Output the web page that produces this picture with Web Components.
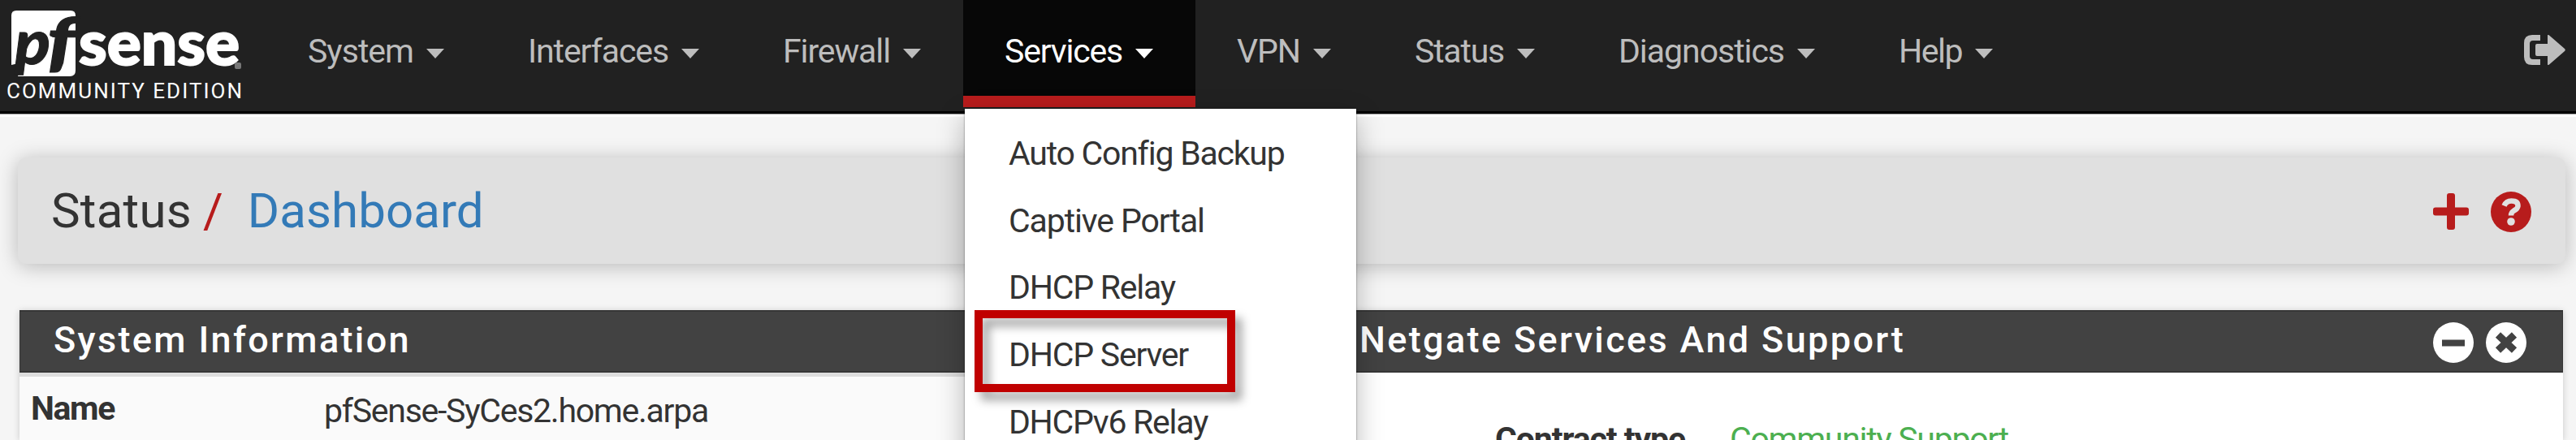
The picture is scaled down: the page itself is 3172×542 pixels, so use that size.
<!DOCTYPE html>
<html lang="en">
<head>
<meta charset="utf-8">
<title>pfSense - Status: Dashboard</title>
<style>
	body {
		margin: 0;
		height: 542px;
		overflow: hidden;
		background: #f5f5f5;
		color: #333;
		font-family: Roboto, "Liberation Sans", sans-serif;
		font-size: 41px;
	}
</style>
</head>
<body>

<template id="pf-logo">
	<style>
		:host { display: block; width: 328px; box-sizing: border-box; padding: 13px 0 0 8px; }
		svg { display: block; overflow: visible; }
		.edition { color: #fff; font-size: 26px; line-height: 30px; margin-top: 3px; }
	</style>
	<svg width="296" height="81" viewBox="8 13 296 81">
		<path fill="#fff" d="M20 13H87Q93 13 93 19V87Q93 94 86 94H22L27 77L14 80V19Q14 13 20 13Z"/>
		<text x="18" y="79" fill="#212121" stroke="#212121" font-family="Lato" font-weight="900" font-style="italic" font-size="76" textLength="44" lengthAdjust="spacingAndGlyphs">p</text>
		<text x="58" y="79" fill="#212121" stroke="#212121" font-family="Lato" font-weight="900" font-style="italic" font-size="80" textLength="35" lengthAdjust="spacingAndGlyphs">f</text>
		<text x="97" y="79.500" fill="#fff" stroke="#fff" stroke-width="2" font-family="Lato" font-weight="900" font-size="76" textLength="198" lengthAdjust="spacingAndGlyphs">sense</text>
		<rect x="289" y="77" width="8" height="8" rx="2" fill="#777"/>
	</svg>
	<div class="edition"><fit-text width="292">COMMUNITY EDITION</fit-text></div>
</template>

<template id="nav-bar">
	<style>
		:host {
			display: flex;
			position: relative;
			z-index: 2;
			height: 137px;
			background: #212121;
			border-bottom: 3px solid #000;
			box-shadow: 0 1px 0 #999, 0 4px 0 #fff;
		}
		nav { display: flex; flex: 1; }
		.logout { margin: 43px 13px 0 0; }
		.logout svg { display: block; }
	</style>
	<pf-logo></pf-logo>
	<nav><slot></slot></nav>
	<div class="logout">
		<svg width="51" height="37" viewBox="0 0 51 37" fill="#bdbdbd">
			<path d="M20 0V7H11Q7 7 7 11V26Q7 30 11 30H20V37H10Q0 37 0 27V10Q0 0 10 0Z"/>
			<path d="M29 1Q29-1 31 .5L50 17Q51.500 18.500 50 20L31 36.500Q29 38 29 36V26H16Q14 26 14 24V13Q14 11 16 11H29Z"/>
		</svg>
	</div>
</template>

<template id="nav-item">
	<style>
		:host { display: block; position: relative; color: #bdbdbd; }
		.link {
			display: flex;
			box-sizing: border-box;
			height: 132px;
			padding: 39px 52px 0 51px;
			gap: 16px;
			line-height: 48px;
			border-bottom: 14px solid transparent;
		}
		:host([active]) { color: #fff; }
		:host([active]) .link { background: #070707; border-color: #b71c1c; }
		.caret {
			width: 0;
			height: 0;
			margin-top: 21px;
			border: 11px solid transparent;
			border-top: 12px solid currentColor;
			border-bottom: 0;
		}
	</style>
	<div class="link"><fit-text></fit-text><span class="caret"></span></div>
	<slot></slot>
</template>

<template id="drop-menu">
	<style>
		:host {
			display: block;
			position: absolute;
			left: 2px;
			top: 134px;
			width: 482px;
			height: 480px;
			box-sizing: border-box;
			padding-top: 12px;
			background: #fff;
			color: #333;
			box-shadow: 0 12px 32px rgba(0, 0, 0, .28), 0 0 2px rgba(0, 0, 0, .5);
		}
	</style>
	<slot></slot>
</template>

<template id="menu-item">
	<style>
		:host { display: block; position: relative; height: 82.7px; line-height: 87px; padding-left: 54px; }
		.mark { display: none; }
		:host([marked]) .mark {
			display: block;
			position: absolute;
			left: 12px;
			top: -12px;
			width: 301px;
			height: 81px;
			border: 10px solid #c00000;
			filter: drop-shadow(8px 10px 6px rgba(0, 0, 0, .36));
		}
	</style>
	<slot></slot><div class="mark"></div>
</template>

<template id="page-header">
	<style>
		:host {
			display: flex;
			justify-content: space-between;
			box-sizing: border-box;
			height: 131px;
			margin: 54px 13px 0 22px;
			padding: 0 42px 0 41px;
			border-radius: 10px;
			background: #e0e0e0;
			box-shadow: 0 3px 26px rgba(0, 0, 0, .25);
			font-size: 60px;
			line-height: 132px;
		}
		.crumbs { display: flex; }
		.slash { color: #b71c1c; margin: 0 30px 0 14px; }
		.page { color: #337ab7; }
		.tools { display: flex; align-items: center; gap: 27px; padding-top: 2px; }
	</style>
	<div class="crumbs">
		<fit-text class="section" width="173">Status</fit-text>
		<span class="slash">/</span>
		<fit-text class="page" width="291">Dashboard</fit-text>
	</div>
	<div class="tools">
		<svg width="44" height="45" viewBox="0 0 44 45" fill="#b71c1c">
			<rect x="17" width="10" height="45" rx="3"/><rect y="17.500" width="44" height="10" rx="3"/>
		</svg>
		<svg width="50" height="50" viewBox="0 0 50 50">
			<circle cx="25" cy="25" r="25" fill="#b71c1c"/>
			<path d="M16.500 17.500Q19 11.500 25.500 11.500Q33.500 11.500 33.500 17.500Q33.500 21 28.500 23.500Q25 25.500 25 29.500" fill="none" stroke="#e0e0e0" stroke-width="6.500"/>
			<circle cx="25" cy="37" r="4.800" fill="#e0e0e0"/>
		</svg>
	</div>
</template>

<template id="dash-panel">
	<style>
		:host { display: block; background: #fff; box-shadow: 0 1px 8px rgba(0, 0, 0, .18); }
		.heading {
			display: flex;
			justify-content: space-between;
			box-sizing: border-box;
			height: 77px;
			padding: 0 44px 0 41px;
			background: #424242;
			border: solid #363636;
			border-width: 2px 1px;
			color: #fff;
			font-size: 45px;
			font-weight: 500;
			line-height: 70px;
		}
		.tools { display: flex; gap: 15px; padding-top: 13px; }
		.body { display: flow-root; height: 83px; }
	</style>
	<div class="heading"><fit-text></fit-text><div class="tools">
		<svg width="50" height="50" viewBox="0 0 50 50">
			<circle cx="25" cy="25" r="25" fill="#fff"/><rect x="11" y="21.500" width="28" height="8" fill="#424242"/>
		</svg>
		<svg width="50" height="50" viewBox="0 0 50 50">
			<circle cx="25" cy="25" r="25" fill="#fff"/>
			<path d="M15 15.500L35 34.500M35 15.500L15 34.500" stroke="#424242" stroke-width="9"/>
		</svg>
	</div></div>
	<div class="body"><slot></slot></div>
</template>

<template id="info-row">
	<style>
		:host {
			display: grid;
			grid-template-columns: var(--label-column) auto;
			justify-content: start;
			height: 83px;
			box-sizing: border-box;
			line-height: 48px;
		}
		::slotted([slot=label]) { font-weight: bold; }
	</style>
	<slot name="label"></slot><slot></slot>
</template>

<style>
	main { display: grid; grid-template-columns: 1550px 1524px; justify-content: space-between; padding: 57px 16px 0 24px; }
	.name { --label-column: 361px; padding: 18px 0 0 14px; background: #fafafa; border-top: 5px solid #ddd; }
	.name [slot=label] { margin-top: -3px; }
	.contract { --label-column: 289px; padding: 58px 0 0 209px; }
	.contract .value { color: #4caf50; }
</style>

<nav-bar>
	<nav-item label="System" width="130"></nav-item>
	<nav-item label="Interfaces" width="173"></nav-item>
	<nav-item label="Firewall" width="132"></nav-item>
	<nav-item label="Services" width="145" active>
		<drop-menu>
			<menu-item><fit-text width="338">Auto Config Backup</fit-text></menu-item>
			<menu-item><fit-text width="241">Captive Portal</fit-text></menu-item>
			<menu-item><fit-text width="205">DHCP Relay</fit-text></menu-item>
			<menu-item marked><fit-text width="221">DHCP Server</fit-text></menu-item>
			<menu-item><fit-text width="245">DHCPv6 Relay</fit-text></menu-item>
		</drop-menu>
	</nav-item>
	<nav-item label="VPN" width="78"></nav-item>
	<nav-item label="Status" width="110"></nav-item>
	<nav-item label="Diagnostics" width="204"></nav-item>
	<nav-item label="Help" width="78"></nav-item>
</nav-bar>

<page-header></page-header>

<main>
	<dash-panel heading="System Information" width="440">
		<info-row class="name">
			<fit-text slot="label" width="103">Name</fit-text>
			<fit-text width="473">pfSense-SyCes2.home.arpa</fit-text>
		</info-row>
	</dash-panel>
	<dash-panel heading="Netgate Services And Support" width="672">
		<info-row class="contract">
			<fit-text slot="label" width="234">Contract type</fit-text>
			<fit-text class="value" width="343">Community Support</fit-text>
		</info-row>
	</dash-panel>
</main>

<script>
	(function() {
		// Attaches a copy of the <template> whose id is the tag name
		class TemplateElement extends HTMLElement {
			constructor() {
				super();
				const template = document.getElementById(this.localName);
				this.attachShadow({mode: 'open'}).appendChild(document.importNode(template.content, true));
			}
		}

		// Spaces a single line of text out to the given width
		class FitText extends HTMLElement {
			constructor() {
				super();
				this.attachShadow({mode: 'open'}).innerHTML =
					'<style>:host { display: inline-block; white-space: nowrap; } span { display: inline-block; }</style>' +
					'<span><slot></slot></span>';
			}

			connectedCallback() {
				this.fit();
			}

			fit() {
				const width = parseFloat(this.getAttribute('width'));
				const text = this.textContent.trim();
				if(!width || !text) {
					return;
				}
				const span = this.shadowRoot.querySelector('span');
				span.style.letterSpacing = '0';
				const natural = span.getBoundingClientRect().width;
				span.style.letterSpacing = (width - natural) / text.length + 'px';
				this.style.width = width + 'px';
			}
		}

		// Passes its own label and width on to the text in its shadow root
		class LabelledElement extends TemplateElement {
			connectedCallback() {
				const text = this.shadowRoot.querySelector('fit-text');
				text.textContent = this.getAttribute('label') || this.getAttribute('heading');
				text.setAttribute('width', this.getAttribute('width'));
				text.fit();
			}
		}

		customElements.define('pf-logo', class extends TemplateElement {});
		customElements.define('nav-bar', class extends TemplateElement {});
		customElements.define('drop-menu', class extends TemplateElement {});
		customElements.define('menu-item', class extends TemplateElement {});
		customElements.define('page-header', class extends TemplateElement {});
		customElements.define('info-row', class extends TemplateElement {});
		customElements.define('fit-text', FitText);
		customElements.define('nav-item', class extends LabelledElement {});
		customElements.define('dash-panel', class extends LabelledElement {});
	})();
</script>
</body>
</html>
